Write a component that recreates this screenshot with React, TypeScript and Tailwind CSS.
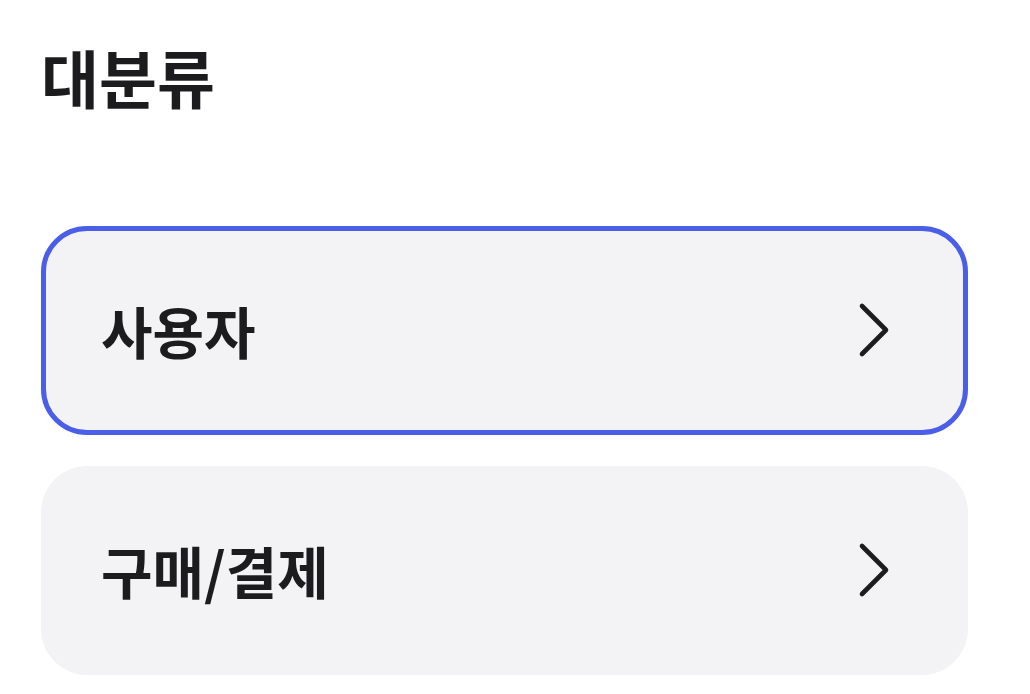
const font = { fontFamily: '"Noto Sans CJK KR", "Noto Sans", sans-serif' };

function Chevron() {
  return (
    <svg width="32" height="56" viewBox="0 0 32 56" fill="none" className="shrink-0">
      <polyline
        points="4,4 28,28 4,52"
        stroke="#1c1c1f"
        strokeWidth="4.6"
        strokeLinecap="round"
        strokeLinejoin="round"
      />
    </svg>
  );
}

export default function App() {
  const items = [
    { label: "사용자", active: true },
    { label: "구매/결제", active: false },
  ];

  return (
    <div className="min-h-screen bg-white px-[41px] pt-[38px] text-[#1c1c1f]" style={font}>
      <h1 className="text-[63px] font-bold leading-[1.2]">대분류</h1>

      <div className="mt-[112px] flex w-[927px] flex-col gap-[31px]">
        {items.map((item) => (
          <button
            key={item.label}
            className={
              "flex h-[209px] items-center justify-between rounded-[46px] border-[5px] bg-[#f3f3f6] pl-[55px] pr-[73px] text-left " +
              (item.active ? "border-[#4a5ee8]" : "border-transparent")
            }
          >
            <span className="text-[56px] font-bold leading-none">{item.label}</span>
            <Chevron />
          </button>
        ))}
      </div>
    </div>
  );
}
